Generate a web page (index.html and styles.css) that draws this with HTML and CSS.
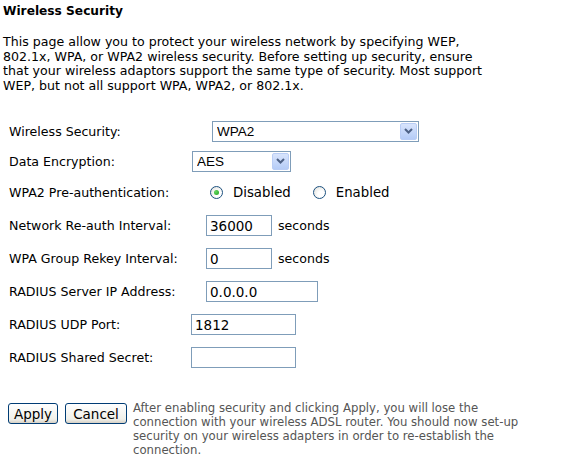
FILE: index.html
```html
<!DOCTYPE html>
<html lang="en">
<head>
    <meta charset="UTF-8">
    <title>Wireless Security</title>
    <link rel="stylesheet" href="styles.css">
</head>
<body>

    <!-- Title -->
    <div class="title">Wireless Security</div>

    <!-- Description -->
    <p class="intro">
        This page allow you to protect your wireless network by specifying WEP,<br>
        802.1x, WPA, or WPA2 wireless security. Before setting up security, ensure<br>
        that your wireless adaptors support the same type of security. Most support<br>
        WEP, but not all support WPA, WPA2, or 802.1x.
    </p>

    <!-- Settings -->
    <div class="form">
        <div class="row row-tight">
            <label class="lbl lbl-sec">Wireless Security:</label>
            <div class="select-wrap sel-wide">
                <select class="select">
                    <option>WPA2</option>
                </select>
                <span class="arrow">
                    <svg width="9" height="6" viewBox="0 0 9 6"><path d="M1 1 L4.5 4.5 L8 1" fill="none" stroke="#4d6185" stroke-width="2"/></svg>
                </span>
            </div>
        </div>

        <div class="row row-tight">
            <label class="lbl lbl-enc">Data Encryption:</label>
            <div class="select-wrap sel-small">
                <select class="select">
                    <option>AES</option>
                </select>
                <span class="arrow">
                    <svg width="9" height="6" viewBox="0 0 9 6"><path d="M1 1 L4.5 4.5 L8 1" fill="none" stroke="#4d6185" stroke-width="2"/></svg>
                </span>
            </div>
        </div>

        <div class="row">
            <label class="lbl lbl-pre">WPA2 Pre-authentication:</label>
            <label class="radio"><input type="radio" name="preauth" checked> Disabled</label>
            <label class="radio"><input type="radio" name="preauth"> Enabled</label>
        </div>

        <div class="row">
            <label class="lbl lbl-mid">Network Re-auth Interval:</label>
            <input type="text" class="text short" value="36000">
            <span class="unit">seconds</span>
        </div>

        <div class="row">
            <label class="lbl lbl-mid">WPA Group Rekey Interval:</label>
            <input type="text" class="text short" value="0">
            <span class="unit">seconds</span>
        </div>

        <div class="row">
            <label class="lbl lbl-mid">RADIUS Server IP Address:</label>
            <input type="text" class="text long" value="0.0.0.0">
        </div>

        <div class="row">
            <label class="lbl lbl-rad">RADIUS UDP Port:</label>
            <input type="text" class="text medium" value="1812">
        </div>

        <div class="row">
            <label class="lbl lbl-rad">RADIUS Shared Secret:</label>
            <input type="password" class="text medium" value="">
        </div>
    </div>

    <!-- Actions -->
    <div class="actions">
        <button class="btn btn-apply">Apply</button>
        <button class="btn btn-cancel">Cancel</button>
        <div class="note">
            After enabling security and clicking Apply, you will lose the<br>
            connection with your wireless ADSL router. You should now set-up<br>
            security on your wireless adapters in order to re-establish the<br>
            connection.
        </div>
    </div>

</body>
</html>
```

FILE: styles.css
```css
body {
    margin: 0;
    padding: 4px 3px 0 3px;
    background: #fff;
    color: #000;
    font-family: 'DejaVu Sans', Verdana, sans-serif;
    font-size: 12.6px;
}

/* Header */
.title {
    font-weight: bold;
    font-size: 12.2px;
    line-height: 14px;
}

.intro {
    margin: 17px 0 0 0;
    line-height: 14.6px;
}

/* Form rows */
.form {
    margin-top: 23px;
    padding-left: 5px;
}

.row {
    display: flex;
    align-items: center;
    height: 33px;
}

.row-tight {
    height: 30px;
}

.lbl {
    flex: none;
    padding-left: 1px;
    box-sizing: border-box;
}

.lbl-sec { width: 204px; }
.lbl-enc { width: 184px; }
.lbl-pre { width: 202px; }
.lbl-mid { width: 198px; }
.lbl-rad { width: 183px; }

/* Dropdowns */
.select-wrap {
    position: relative;
    height: 21px;
}

.sel-wide { width: 207px; }
.sel-small { width: 99px; }

.select {
    appearance: none;
    -webkit-appearance: none;
    width: 100%;
    height: 100%;
    margin: 0;
    padding: 0 0 0 4px;
    border: 1px solid #7f9db9;
    border-radius: 0;
    background: #fff;
    font-family: 'Liberation Sans', Arial, sans-serif;
    font-size: 13.5px;
    color: #000;
}

.arrow {
    position: absolute;
    top: 2px;
    right: 2px;
    width: 15px;
    height: 15px;
    border: 1px solid #b9cdf5;
    border-radius: 2px;
    background: linear-gradient(#d8e4fc, #b5ccf7);
    display: flex;
    align-items: center;
    justify-content: center;
    pointer-events: none;
}

/* Radios */
.radio {
    display: flex;
    align-items: center;
    margin-right: 22px;
    font-size: 13.3px;
}

.radio input {
    appearance: none;
    -webkit-appearance: none;
    width: 13px;
    height: 13px;
    margin: 0 10px 0 0;
    border: 1px solid #1c5180;
    border-radius: 50%;
    background: radial-gradient(circle at 65% 65%, #fff 30%, #dcdcd6 100%);
    position: relative;
}

.radio input:checked::after {
    content: '';
    position: absolute;
    left: 3px;
    top: 3px;
    width: 5px;
    height: 5px;
    border-radius: 50%;
    background: radial-gradient(circle at 35% 35%, #62d85e, #21a121);
}

/* Text inputs */
.text {
    height: 21px;
    margin: 0;
    padding: 0 3px;
    box-sizing: border-box;
    border: 1px solid #7f9db9;
    font-family: 'DejaVu Sans', Verdana, sans-serif;
    font-size: 13.5px;
    color: #000;
}

.short { width: 66px; }
.long { width: 112px; }
.medium { width: 105px; }

.unit {
    margin-left: 6px;
}

/* Buttons and note */
.actions {
    display: flex;
    align-items: flex-start;
    margin-top: 24px;
    padding-left: 5px;
}

.btn {
    height: 21px;
    margin: 5px 7px 0 0;
    padding: 0;
    border: 1px solid #003c74;
    border-radius: 3px;
    background: linear-gradient(#ffffff, #f0f0ea 80%, #d6d0c5);
    font-family: 'DejaVu Sans', Verdana, sans-serif;
    font-size: 13.5px;
    color: #000;
}

.btn-apply { width: 50px; }
.btn-cancel { width: 62px; margin-right: 6px; }

.note {
    margin-top: 4px;
    font-size: 11.7px;
    line-height: 13.8px;
    color: #555;
}
```
